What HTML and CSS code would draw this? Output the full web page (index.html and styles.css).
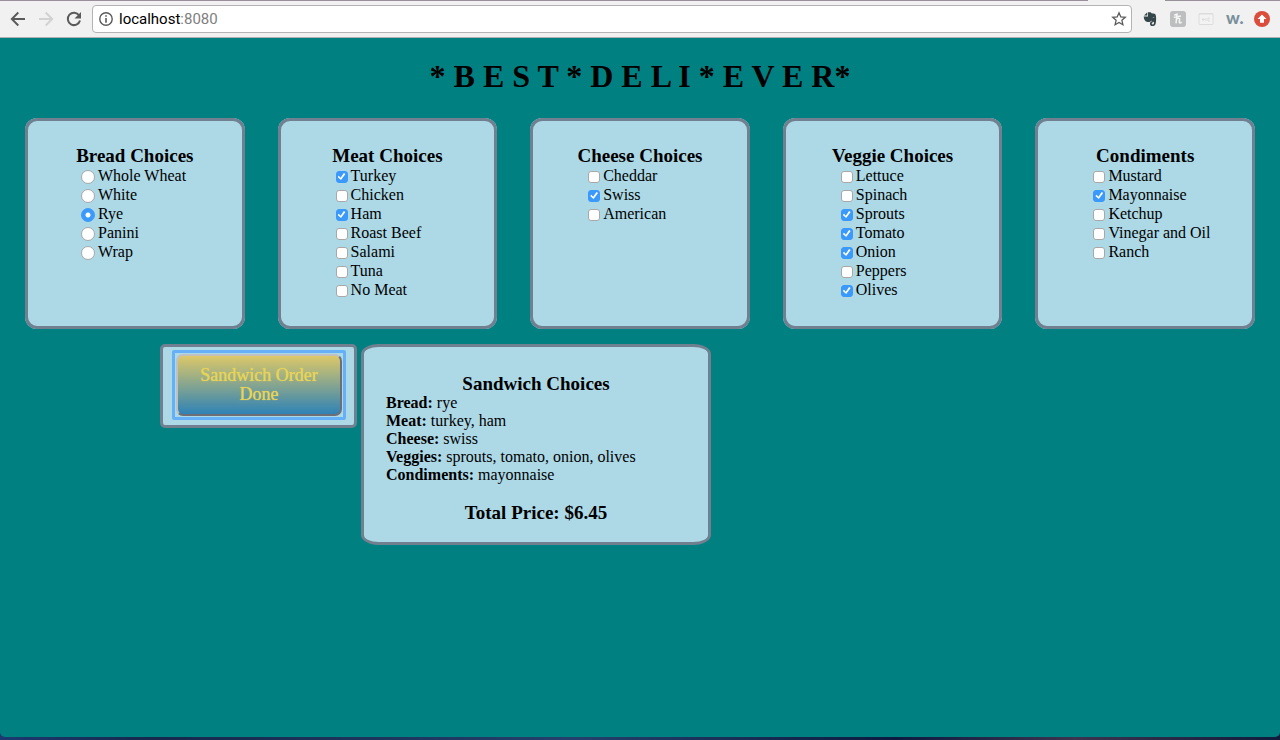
FILE: index.html
```html
<!DOCTYPE html>
<html lang="en">
<head>
<meta charset="utf-8">
<title>Best Deli Ever</title>
<link rel="stylesheet" href="styles.css">
</head>
<body>
<div class="window">
  <header class="toolbar">
    <button class="tool" type="button" aria-label="Back"><svg viewBox="0 0 16 16"><path d="M15 8H2M8.300 1.500L1.800 8l6.500 6.500" fill="none" stroke="#5a5a5a" stroke-width="1.900"/></svg></button>
    <button class="tool" type="button" aria-label="Forward"><svg viewBox="0 0 16 16"><path d="M1 8H14M7.700 1.500L14.200 8l-6.500 6.500" fill="none" stroke="#d2d2d2" stroke-width="1.900"/></svg></button>
    <button class="tool" type="button" aria-label="Reload"><svg viewBox="0 0 16 16"><path d="M13.200 4.500A6.200 6.200 0 1 0 14 9.500" fill="none" stroke="#5a5a5a" stroke-width="2"/><path d="M15 1v6.500H8.500z" fill="#5a5a5a"/></svg></button>
    <div class="address">
      <svg class="info" viewBox="0 0 14 14"><circle cx="7" cy="7" r="6.200" fill="none" stroke="#5a5a5a" stroke-width="1.400"/><path d="M6.200 3.200h1.600v1.600H6.200zM6.200 6h1.600v4.800H6.200z" fill="#5a5a5a"/></svg>
      <span class="url" role="textbox" aria-label="Address">localhost<span class="port">:8080</span></span>
      <svg class="star" viewBox="0 0 16 16"><path d="M8 1.800l1.800 4.100 4.500.4-3.400 3 1 4.400L8 11.400l-3.900 2.300 1-4.400-3.400-3 4.500-.4z" fill="none" stroke="#5a5a5a" stroke-width="1.300"/></svg>
    </div>
    <div class="extensions">
      <svg viewBox="0 0 16 16"><path d="M2 4.600L5.300 1.300v3.300zM6 1.200h2.600l1 1 3 .6c1.500.4 1.900 4.500 1.300 8.500-.3 2.300-.9 3.700-3 3.700-2.300 0-3-1-2.900-2.600.1-1.400 1-2 2.500-1.900v1.400c-1.200 0-1.200 1.700.4 1.600 1.100-.1 1.200-1.300 1-2.500-1-.2-2.300-.5-2.700-1.500-.4 1.400-2.200 1.600-3.600 1.400C3 10.500 2 8.600 1.700 5.400H6zM10.500 6.600c.7-.7 1.700-.4 2 .3z" fill="#34464a" fill-rule="evenodd"/></svg>
      <svg viewBox="0 0 16 16"><rect width="16" height="16" rx="3" fill="#bdbebf"/><path d="M4.200 4.300L7 3.200 6 12.300M6.200 8.500c1.200-2 3.800-1.700 3.400.3-.3 1.300-.8 3.200.4 3.200.8 0 1.300-.5 1.500-1.200M3.800 6.300L11 5" fill="none" stroke="#f5f5f5" stroke-width="1.500"/></svg>
      <svg viewBox="0 0 16 16"><rect x="1" y="2.500" width="14" height="11" rx="1" fill="#f3f3f3" stroke="#dcdcdc"/><path d="M1 3h14M4 8.500h3M5 7v3M8 7v3M12 7H10v3h2" fill="none" stroke="#dcdcdc"/></svg>
      <span class="w-mark">w.</span>
      <svg viewBox="0 0 16 16"><circle cx="8" cy="8" r="8" fill="#db4c3c"/><path d="M8 3.500L12.500 8H10v3.800H6V8H3.500z" fill="#fff"/></svg>
    </div>
  </header>

  <main class="page">
    <h1 class="title">* B E S T * D E L I * E V E R*</h1>
    <form class="order">
      <div class="menus">
        <fieldset class="card">
          <h3 class="heading">Bread Choices</h3>
          <label class="option"><input class="radio" type="radio" name="bread">Whole Wheat</label>
          <label class="option"><input class="radio" type="radio" name="bread">White</label>
          <label class="option"><input class="radio" type="radio" name="bread" checked>Rye</label>
          <label class="option"><input class="radio" type="radio" name="bread">Panini</label>
          <label class="option"><input class="radio" type="radio" name="bread">Wrap</label>
        </fieldset>
        <fieldset class="card">
          <h3 class="heading">Meat Choices</h3>
          <label class="option"><input class="check" type="checkbox" checked>Turkey</label>
          <label class="option"><input class="check" type="checkbox">Chicken</label>
          <label class="option"><input class="check" type="checkbox" checked>Ham</label>
          <label class="option"><input class="check" type="checkbox">Roast Beef</label>
          <label class="option"><input class="check" type="checkbox">Salami</label>
          <label class="option"><input class="check" type="checkbox">Tuna</label>
          <label class="option"><input class="check" type="checkbox">No Meat</label>
        </fieldset>
        <fieldset class="card">
          <h3 class="heading">Cheese Choices</h3>
          <label class="option"><input class="check" type="checkbox">Cheddar</label>
          <label class="option"><input class="check" type="checkbox" checked>Swiss</label>
          <label class="option"><input class="check" type="checkbox">American</label>
        </fieldset>
        <fieldset class="card">
          <h3 class="heading">Veggie Choices</h3>
          <label class="option"><input class="check" type="checkbox">Lettuce</label>
          <label class="option"><input class="check" type="checkbox">Spinach</label>
          <label class="option"><input class="check" type="checkbox" checked>Sprouts</label>
          <label class="option"><input class="check" type="checkbox" checked>Tomato</label>
          <label class="option"><input class="check" type="checkbox" checked>Onion</label>
          <label class="option"><input class="check" type="checkbox">Peppers</label>
          <label class="option"><input class="check" type="checkbox" checked>Olives</label>
        </fieldset>
        <fieldset class="card">
          <h3 class="heading">Condiments</h3>
          <label class="option"><input class="check" type="checkbox">Mustard</label>
          <label class="option"><input class="check" type="checkbox" checked>Mayonnaise</label>
          <label class="option"><input class="check" type="checkbox">Ketchup</label>
          <label class="option"><input class="check" type="checkbox">Vinegar and Oil</label>
          <label class="option"><input class="check" type="checkbox">Ranch</label>
        </fieldset>
      </div>
      <div class="result">
        <div class="submit">
          <button class="done" type="button">Sandwich Order Done</button>
        </div>
        <section class="summary">
          <h3 class="heading">Sandwich Choices</h3>
          <p class="line"><b>Bread:</b> rye</p>
          <p class="line"><b>Meat:</b> turkey, ham</p>
          <p class="line"><b>Cheese:</b> swiss</p>
          <p class="line"><b>Veggies:</b> sprouts, tomato, onion, olives</p>
          <p class="line"><b>Condiments:</b> mayonnaise</p>
          <h3 class="heading total">Total Price: $6.45</h3>
        </section>
      </div>
    </form>
  </main>
</div>
</body>
</html>
```
FILE: styles.css
```css
* {
  box-sizing: border-box;
}

body {
  margin: 0;
  background: linear-gradient(90deg, #1c3a70, #16284c 12%, #24406c 45%, #0c1c40 70%, #3c3450 84%, #101c3c);
  color: #000;
  font-family: "Liberation Serif", "Times New Roman", serif;
  font-size: 16px;
}

.window {
  display: flex;
  flex-direction: column;
  min-height: calc(100vh - 3px);
  margin-bottom: 3px;
  border-radius: 0 0 5px 5px;
  background: #008080;
}

/* Browser toolbar */
.toolbar {
  display: flex;
  align-items: center;
  height: 38px;
  padding: 0 10px;
  gap: 12px;
  border-bottom: 1px solid #b0b0b0;
  background: linear-gradient(90deg, #989098 85%, #f1f1f1 85% 91%, #989098 91%) top / 100% 1px no-repeat, #f1f1f1;
}

.tool {
  width: 16px;
  height: 16px;
  padding: 0;
  border: 0;
  background: none;
}

.tool svg,
.extensions svg {
  display: block;
  width: 16px;
  height: 16px;
}

.address {
  display: flex;
  flex: 1;
  align-items: center;
  height: 28px;
  margin: 0 -2px;
  padding: 0 4px 0 6px;
  gap: 6px;
  border: 1px solid #b4b4b4;
  border-radius: 4px;
  background: #fff;
}

.info {
  width: 14px;
  height: 14px;
}

.url {
  flex: 1;
  font-family: Roboto, sans-serif;
  font-size: 15px;
}

.port {
  color: #808080;
}

.star {
  width: 16px;
  height: 16px;
}

.extensions {
  display: flex;
  align-items: center;
  gap: 12px;
}

.w-mark {
  width: 16px;
  padding-bottom: 2px;
  color: #78909c;
  font: 900 17px/16px Lato, sans-serif;
}

/* Page */
.page {
  flex: 1;
  padding: 0 25px;
}

.title {
  margin: 20px 0 23px;
  font-size: 32px;
  line-height: 37px;
  text-align: center;
}

.menus {
  display: grid;
  grid-template-columns: repeat(5, 1fr);
  gap: 33px;
}

.card {
  min-width: 0;
  margin: 0;
  padding: 24px 0 27px;
  border: 3px solid #708090;
  border-radius: 12px;
  background: #add8e6;
}

.heading {
  margin: 0;
  font-size: 19px;
  line-height: 21px;
  text-align: center;
}

.option {
  display: flex;
  align-items: center;
  padding-left: 53px;
  line-height: 19px;
}

.radio,
.check {
  flex: none;
  appearance: none;
  border: 1px solid #a8a8a8;
  background: #fff;
}

.radio {
  width: 14px;
  height: 14px;
  margin: 2px 3px 0 0;
  border-radius: 50%;
}

.check {
  display: grid;
  place-items: center;
  width: 12px;
  height: 12px;
  margin: 2px 3px 0 2px;
  border-radius: 3px;
}

.radio:checked {
  border-color: #3b99fc;
  background: radial-gradient(circle, #fff 2px, #3b99fc 3px);
}

.check:checked {
  border-color: #3b99fc;
  background: #3b99fc;
}

.check:checked::before {
  content: "";
  width: 8px;
  height: 8px;
  background: #fff;
  clip-path: polygon(0 55%, 15% 40%, 38% 65%, 78% 5%, 98% 18%, 42% 95%);
}

.result {
  display: flex;
  align-items: flex-start;
  gap: 4px;
  margin: 15px 0 0 135px;
}

.submit {
  width: 197px;
  padding: 7px 12px 9px 13px;
  border: 3px solid #708090;
  border-radius: 5px;
  background: #add8e6;
}

.done {
  position: relative;
  display: block;
  width: 100%;
  padding: 10px 20px;
  border: 2px solid;
  border-color: #c0c0c0 #6e6e76 #6e6e76 #c0c0c0;
  border-radius: 7px;
  outline: none;
  background: linear-gradient(#e2ca66, #2980b9) border-box;
  color: #e8d458;
  font: 18px/19px "Liberation Serif", serif;
  text-shadow: 0 0 1px #e8d458;
}

/* Square focus ring around the rounded button */
.done::after {
  content: "";
  position: absolute;
  inset: -6px;
  border: 3px solid #66b0f8;
  border-radius: 2px;
}

.summary {
  width: 350px;
  padding: 26px 22px 19px;
  border: 3px solid #708090;
  border-radius: 5%;
  background: #add8e6;
}

.line {
  margin: 0;
  line-height: 18px;
}

.total {
  margin-top: 18px;
}
```
